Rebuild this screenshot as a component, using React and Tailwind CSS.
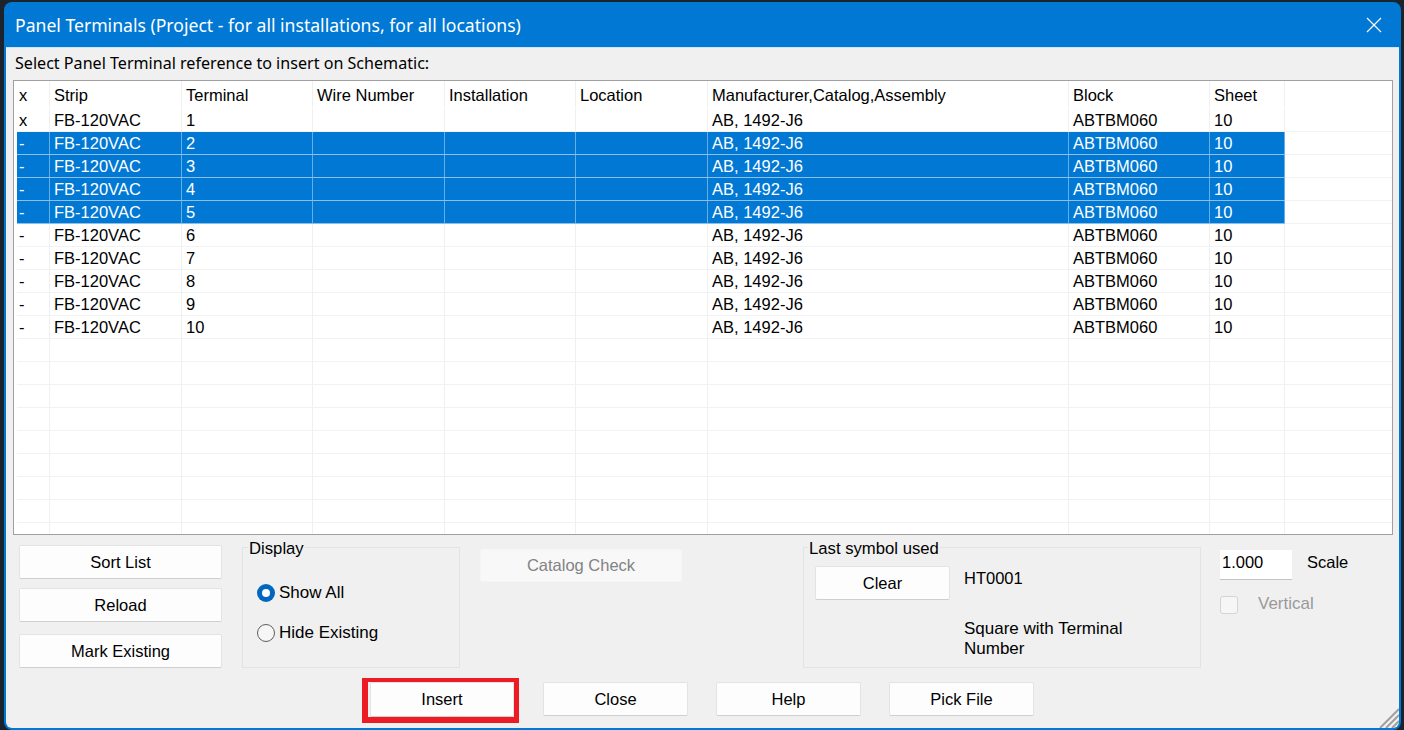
// App.jsx: Panel Terminals dialog with terminal list, display options and action buttons.
const columns = [
  { label: "x", width: "w-[33px] pl-[2px]", key: "mark" },
  { label: "Strip", width: "w-[132px] pl-[4px]", key: "strip" },
  { label: "Terminal", width: "w-[131px] pl-[4px]", key: "terminal" },
  { label: "Wire Number", width: "w-[132px] pl-[4px]", key: "wire" },
  { label: "Installation", width: "w-[131px] pl-[4px]", key: "install" },
  { label: "Location", width: "w-[132px] pl-[4px]", key: "location" },
  { label: "Manufacturer,Catalog,Assembly", width: "w-[361px] pl-[4px]", key: "catalog" },
  { label: "Block", width: "w-[141px] pl-[4px]", key: "block" },
  { label: "Sheet", width: "w-[75px] pl-[4px]", key: "sheet" },
];

const rows = Array.from({ length: 10 }, (_, i) => ({
  mark: i === 0 ? "x" : "-",
  strip: "FB-120VAC",
  terminal: String(i + 1),
  wire: "",
  install: "",
  location: "",
  catalog: "AB, 1492-J6",
  block: "ABTBM060",
  sheet: "10",
  selected: i >= 1 && i <= 4,
}));

const emptyRows = Array.from({ length: 9 }, () => ({}));

// Single row of the list, blue when selected
const Row = ({ row }) => (
  <div className="flex h-[23px]">
    <div className={`flex h-[23px] border-b ${row.selected ? "border-[#8cc0ea] bg-[#0078d4] text-white" : "border-[#f2f2f2]"}`}>
      {columns.map((col) => (
        <div
          key={col.key}
          className={`${col.width} h-[22px] shrink-0 border-r leading-[22px] whitespace-nowrap ${
            row.selected ? "border-[#66aee5]" : "border-[#f0f0f0]"
          }`}
        >
          {row[col.key]}
        </div>
      ))}
    </div>
    <div className="h-[23px] flex-1 border-b border-[#f2f2f2]"></div>
  </div>
);

const Btn = ({ label, className = "", disabled }) => (
  <button
    type="button"
    className={`rounded-[2px] border text-center text-[16.5px] ${
      disabled ? "border-[#f5f5f5] bg-[#f8f8f8] text-[#838383]" : "border-[#e3e3e3] border-b-[#cfcfcf] bg-[#fdfdfd] text-black"
    } ${className}`}
  >
    {label}
  </button>
);

export default function App() {
  return (
    <div className="h-[730px] w-[1404px] overflow-hidden bg-[#1b232c] pl-[4px] pt-[2px] font-['Liberation_Sans',Arial,sans-serif] text-[16.5px] text-black">
      <div className="flex h-[728px] w-[1397px] flex-col rounded-[8px] bg-[#0078d4] px-[2px] pb-[2px]">
        {/* Title bar */}
        <div className="flex h-[45px] shrink-0 items-center justify-between pl-[9px] pr-[17px] font-['Noto_Sans',sans-serif] text-[17.6px] text-white">
          <span className="mt-[2px]">Panel Terminals (Project - for all installations, for all locations)</span>
          <svg width="16" height="16" viewBox="0 0 16 16" fill="none" stroke="white" strokeWidth="1.2">
            <path d="M1 1 L15 15 M15 1 L1 15" />
          </svg>
        </div>

        <div className="relative flex min-h-0 flex-1 flex-col rounded-b-[6px] border-t border-[#cfe4f6] bg-[#f0f0f0]">
          <div className="flex h-[32px] shrink-0 items-center pb-[2px] pl-[9px] font-['Noto_Sans',sans-serif] text-[16.1px]">
            Select Panel Terminal reference to insert on Schematic:
          </div>

          {/* Terminal list */}
          <div className="ml-[7px] h-[455px] w-[1380px] shrink-0 overflow-hidden border border-[#a0a0a0] bg-white pl-[3px]">
            <div className="flex h-[28px]">
              {columns.map((col) => (
                <div
                  key={col.key}
                  className={`${col.width} h-[27px] shrink-0 border-r border-[#f0f0f0] pt-[2px] leading-[25px] whitespace-nowrap`}
                >
                  {col.label}
                </div>
              ))}
            </div>
            {rows.map((row) => (
              <Row key={row.terminal} row={row} />
            ))}
            {emptyRows.map((row, i) => (
              <Row key={i} row={row} />
            ))}
          </div>

          {/* Options */}
          <div className="ml-[13px] mt-[10px] flex h-[123px] shrink-0 items-start">
            <div className="flex w-[203px] flex-col">
              <Btn label="Sort List" className="h-[34px]" />
              <Btn label="Reload" className="mt-[9px] h-[34px]" />
              <Btn label="Mark Existing" className="mt-[12px] h-[34px]" />
            </div>

            <div className="relative ml-[20px] mt-[2px] h-[121px] w-[218px] border border-[#e3e3e3] pl-[14px] pt-[35px] text-[17px]">
              <span className="absolute left-[5px] top-[-8px] bg-[#f0f0f0] px-[1px] text-[16.7px] leading-[18px]">Display</span>
              <div className="flex h-[20px] items-center gap-[4px]">
                <span className="flex h-[18px] w-[18px] items-center justify-center rounded-full bg-[#0067c0]">
                  <span className="h-[8px] w-[8px] rounded-full bg-white"></span>
                </span>
                Show All
              </div>
              <div className="mt-[20px] flex h-[20px] items-center gap-[4px]">
                <span className="h-[18px] w-[18px] rounded-full border border-[#5f5f5f] bg-[#f6f6f6]"></span>
                Hide Existing
              </div>
            </div>

            <Btn label="Catalog Check" disabled className="ml-[20px] mt-[4px] h-[33px] w-[202px]" />

            <div className="relative ml-[121px] mt-[2px] flex h-[121px] w-[398px] border border-[#e3e3e3] pl-[11px] pt-[18px]">
              <span className="absolute left-[4px] top-[-8px] bg-[#f0f0f0] px-[1px] text-[16.7px] leading-[18px]">Last symbol used</span>
              <Btn label="Clear" className="h-[34px] w-[135px] shrink-0" />
              <div className="ml-[14px] flex flex-col">
                <span className="mt-[2px] leading-[20px]">HT0001</span>
                <span className="mt-[31px] w-[190px] text-[17px] leading-[20px]">Square with Terminal Number</span>
              </div>
            </div>

            <div className="ml-[19px] mt-[5px] flex flex-col">
              <div className="flex items-start">
                <div className="h-[30px] w-[72px] border-b border-[#c4c4c4] bg-white pl-[2px] leading-[24px]">1.000</div>
                <span className="ml-[15px] leading-[24px]">Scale</span>
              </div>
              <div className="mt-[16px] flex items-start text-[#9a9a9a]">
                <span className="h-[18px] w-[18px] rounded-[3px] border border-[#d4d4d4] bg-[#f6f6f6]"></span>
                <span className="ml-[20px] mt-[-1px] text-[17px] leading-[18px]">Vertical</span>
              </div>
            </div>
          </div>

          {/* Action buttons */}
          <div className="ml-[356px] mt-[10px] flex items-start">
            <div className="border-[4px] border-x-[5px] border-[#ed1c24] border-b-[6px] border-l-[6px]">
              <div className="pl-[2px]">
                <Btn label="Insert" className="h-[35px] w-[144px] border-[#7fb2dc] border-b-[#4a90cf]" />
              </div>
            </div>
            <Btn label="Close" className="ml-[24px] mt-[4px] h-[34px] w-[145px]" />
            <Btn label="Help" className="ml-[28px] mt-[4px] h-[34px] w-[145px]" />
            <Btn label="Pick File" className="ml-[28px] mt-[4px] h-[34px] w-[145px]" />
          </div>

          {/* Resize grip */}
          <svg className="absolute bottom-0 right-0" width="20" height="20" viewBox="0 0 20 20" stroke="#a0a0a0" strokeWidth="2">
            <path d="M20 1 L1 20 M20 7 L7 20 M20 13 L13 20" />
          </svg>
        </div>
      </div>
    </div>
  );
}
